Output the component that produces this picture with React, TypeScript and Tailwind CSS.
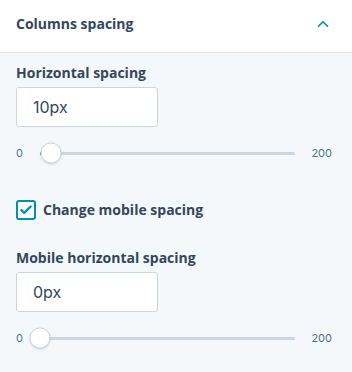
import { Check, ChevronUp } from "lucide-react";

const SpacingField = ({
  label,
  value,
  thumbLeft,
}: {
  label: string;
  value: string;
  thumbLeft: number;
}) => (
  <div className="flex flex-col">
    <label className="text-[14px] font-bold text-[#33475b] leading-[20px]">{label}</label>
    <div className="mt-[4px] w-[142px] h-[40px] bg-white border border-[#cbd6e2] rounded-[3px] flex items-center px-[16px] text-[16px] text-[#33475b] font-['Inter',sans-serif]">
      {value}
    </div>
    <div className="mt-[16px] flex items-center h-[20px]">
      <span className="w-[14px] text-[11px] text-[#516f90] font-['Inter',sans-serif]">0</span>
      <div className="relative flex-1 h-[3px] bg-[#cbd6e2] ml-[10px] mr-[16px] rounded-full">
        <div
          className="absolute top-0 left-0 h-[3px] bg-[#0091ae] rounded-full"
          style={{ width: thumbLeft }}
        />
        <div
          className="absolute top-1/2 -translate-y-1/2 -translate-x-1/2 w-[21px] h-[21px] rounded-full bg-white border border-[#cbd6e2] shadow-sm"
          style={{ left: thumbLeft }}
        />
      </div>
      <span className="text-[11px] text-[#516f90] font-['Inter',sans-serif]">200</span>
    </div>
  </div>
);

export default function App() {
  return (
    <div className="w-[352px] h-[372px] bg-[#f5f8fa] font-['Open_Sans',sans-serif]">
      <div className="h-[53px] bg-white border-b border-[#dfe3eb] flex items-center justify-between pl-[16px] pr-[20px] pb-[5px]">
        <h3 className="text-[14px] font-bold text-[#33475b]">Columns spacing</h3>
        <ChevronUp className="size-[18px] text-[#0091ae]" strokeWidth={2.25} />
      </div>
      <div className="px-[16px] pt-[10px] pr-[20px]">
        <SpacingField label="Horizontal spacing" value="10px" thumbLeft={11} />
        <label className="mt-[37px] flex items-center gap-[7px] h-[20px]">
          <span className="size-[20px] rounded-[3px] border-2 border-[#0091ae] bg-white flex items-center justify-center">
            <Check className="size-[14px] text-[#0091ae]" strokeWidth={4} />
          </span>
          <span className="text-[14px] font-bold text-[#33475b] leading-[20px]">Change mobile spacing</span>
        </label>
        <div className="mt-[28px]">
          <SpacingField label="Mobile horizontal spacing" value="0px" thumbLeft={0} />
        </div>
      </div>
    </div>
  );
}
